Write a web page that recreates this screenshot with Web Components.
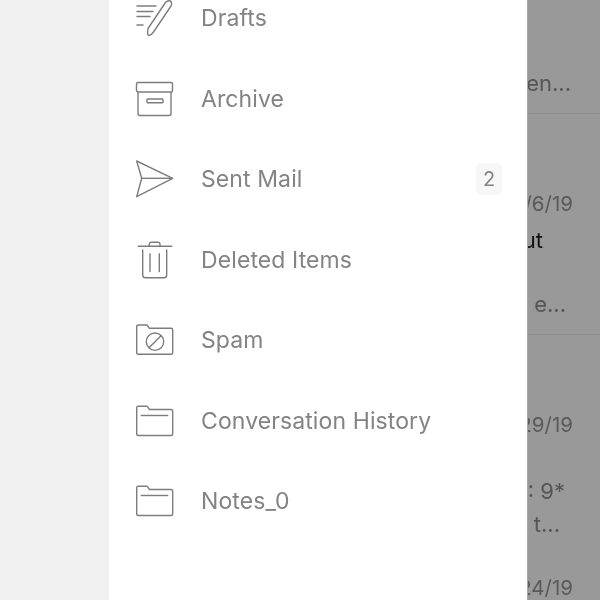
<!DOCTYPE html>
<html>
<head>
<meta charset="utf-8">
<title>Mail folders</title>
<style>
    html, body { margin: 0; height: 100%; overflow: hidden; }
    body { font-family: Inter, "Liberation Sans", sans-serif; }
</style>
</head>
<body>

<!-- Defines element markup -->
<template id="mail-screen">
    <style>
        :host {
            display: grid;
            grid-template-columns: 109px 418px 73px;
            width: 600px;
            height: 600px;
            overflow: hidden;
            filter: blur(0.3px);
        }

        .rail { background: #f0f0f0; }
    </style>
    <div class="rail"></div>
    <slot name="drawer"></slot>
    <slot name="peek"></slot>
</template>

<template id="folder-list">
    <style>
        :host {
            display: flex;
            flex-direction: column;
            background: #fff;
            height: 600px;
            overflow: hidden;
        }

        .rows {
            display: flex;
            flex-direction: column;
            margin-top: -22px;
        }
    </style>
    <div class="rows"><slot></slot></div>
</template>

<template id="folder-row">
    <style>
        :host {
            display: flex;
            align-items: center;
            height: 80.5px;
            flex: none;
            padding: 0 25px 0 26px;
            color: #838383;
            font-size: 23px;
            letter-spacing: 0.1px;
        }

        .icon {
            width: 40px;
            height: 40px;
            flex: none;
            margin-right: 26px;
        }

        ::slotted(svg) {
            display: block;
            width: 40px;
            height: 40px;
        }

        .label { flex: 1; white-space: nowrap; }

        .badge {
            display: none;
            align-items: center;
            justify-content: center;
            width: 26px;
            height: 32px;
            border-radius: 5px;
            background: #f7f7f7;
            font-size: 20px;
            letter-spacing: 0;
        }

        :host([count]) .badge { display: flex; }
    </style>
    <div class="icon"><slot name="icon"></slot></div>
    <div class="label"><slot></slot></div>
    <div class="badge"></div>
</template>

<template id="mail-peek">
    <style>
        :host {
            display: flex;
            flex-direction: column;
            box-sizing: border-box;
            background: #999;
            border-left: 1px solid #a9a9a9;
            height: 600px;
            overflow: hidden;
        }

        ::slotted(hr) {
            flex: none;
            width: 100%;
            height: 1px;
            border: 0;
            margin-bottom: 0;
            margin-left: 0;
            margin-right: 0;
            background: #8a8a8a;
        }
    </style>
    <slot></slot>
</template>

<template id="peek-line">
    <style>
        :host {
            display: flex;
            justify-content: flex-end;
            flex: none;
            height: 30px;
            line-height: 30px;
            color: #555;
            font-size: 22px;
            white-space: nowrap;
            overflow: hidden;
        }

        :host([dark]) { color: #111; }
        :host([date]) { font-size: 20.5px; color: #5a5a5a; }
    </style>
    <slot></slot>
</template>

<mail-screen>
    <folder-list slot="drawer">
        <folder-row>
            <svg slot="icon" viewBox="0 0 40 40" fill="none" stroke="#7d7d7d" stroke-width="1.4" stroke-linecap="round" stroke-linejoin="round">
                <path d="M2 8H21M2 13.5H18M2 18.5H15M2 27H8"/>
                <path d="M13 30.5L30.5 4.5Q33 2 35.5 3Q37.5 5 36 8L18.5 34Q15 38 13.5 37.5Q12 36.5 13 30.5Z"/>
            </svg>
            Drafts
        </folder-row>
        <folder-row>
            <svg slot="icon" viewBox="0 0 40 40" fill="none" stroke="#7d7d7d" stroke-width="1.4" stroke-linejoin="round">
                <rect x="1.5" y="3.5" width="36" height="9.5" rx="1.5"/>
                <path d="M3 13V34.5Q3 36.5 5 36.5H34Q36 36.5 36 34.5V13"/>
                <rect x="12" y="20" width="16" height="3.8" rx="0.8"/>
            </svg>
            Archive
        </folder-row>
        <folder-row count="2">
            <svg slot="icon" viewBox="0 0 40 40" fill="none" stroke="#7d7d7d" stroke-width="1.4" stroke-linejoin="round">
                <path d="M1.7 2L37.7 19.3L1.7 37.7L6.7 19.3Z"/>
                <path d="M6.7 19.3H37.7"/>
            </svg>
            Sent Mail
        </folder-row>
        <folder-row>
            <svg slot="icon" viewBox="0 0 40 40" fill="none" stroke="#7d7d7d" stroke-width="1.4" stroke-linecap="round" stroke-linejoin="round">
                <path d="M3.3 6.2H36.7"/>
                <path d="M14.3 6V4Q14.3 2.2 16 2.2H23.3Q25 2.2 25 4V6"/>
                <path d="M7.7 10V35Q7.7 37.8 10.5 37.8H29Q31.7 37.8 31.7 35V10"/>
                <path d="M15 13.8V31.5M24.3 13.8V31.5"/>
            </svg>
            Deleted Items
        </folder-row>
        <folder-row>
            <svg slot="icon" viewBox="0 0 40 40" fill="none" stroke="#7d7d7d" stroke-width="1.4" stroke-linejoin="round">
                <path d="M1.7 6.5Q1.7 5 3.2 5H12L14.5 8.3H36Q37.7 8.3 37.7 10V32.8Q37.7 34.3 36 34.3H3.2Q1.7 34.3 1.7 32.8Z"/>
                <circle cx="20" cy="21.7" r="8.7"/>
                <path d="M14 27.7L26 15.7"/>
            </svg>
            Spam
        </folder-row>
        <folder-row>
            <svg slot="icon" viewBox="0 0 40 40" fill="none" stroke="#7d7d7d" stroke-width="1.4" stroke-linejoin="round">
                <path d="M1.7 6.7Q1.7 5.2 3.2 5.2H12L14.5 8.5H36Q37.7 8.5 37.7 10V33Q37.7 34.5 36 34.5H3.2Q1.7 34.5 1.7 33Z"/>
                <path d="M5.7 14.5H33.3"/>
            </svg>
            Conversation History
        </folder-row>
        <folder-row>
            <svg slot="icon" viewBox="0 0 40 40" fill="none" stroke="#7d7d7d" stroke-width="1.4" stroke-linejoin="round">
                <path d="M1.7 6.7Q1.7 5.2 3.2 5.2H12L14.5 8.5H36Q37.7 8.5 37.7 10V33Q37.7 34.5 36 34.5H3.2Q1.7 34.5 1.7 33Z"/>
                <path d="M5.7 14.5H33.3"/>
            </svg>
            Notes_0
        </folder-row>
    </folder-list>

    <mail-peek slot="peek">
        <peek-line style="margin-top:68px;padding-right:29px">en...</peek-line>
        <hr style="margin-top:15px">
        <peek-line date style="margin-top:75px;padding-right:27px">/6/19</peek-line>
        <peek-line dark style="margin-top:6px;padding-right:57px">ut</peek-line>
        <peek-line style="margin-top:34px;padding-right:34px">e...</peek-line>
        <hr style="margin-top:15px">
        <peek-line date style="margin-top:75px;padding-right:27px">29/19</peek-line>
        <peek-line style="margin-top:36px;padding-right:35px">: 9*</peek-line>
        <peek-line style="margin-top:3px;padding-right:40px">t...</peek-line>
        <peek-line date style="margin-top:34px;padding-right:27px">24/19</peek-line>
    </mail-peek>
</mail-screen>

<script>
    // every element just stamps its template into an open shadow root
    class TemplateElement extends HTMLElement {
        constructor(id) {
            super();
            let template = document.getElementById(id);
            const shadowRoot = this.attachShadow({ mode: "open" });
            shadowRoot.appendChild(template.content.cloneNode(true));
        }
    }

    customElements.define("mail-screen", class extends TemplateElement {
        constructor() { super("mail-screen"); }
    });

    customElements.define("folder-list", class extends TemplateElement {
        constructor() { super("folder-list"); }
    });

    customElements.define("folder-row", class extends TemplateElement {
        constructor() { super("folder-row"); }

        connectedCallback() {
            if (this.hasAttribute("count")) {
                this.shadowRoot.querySelector(".badge").textContent = this.getAttribute("count");
            }
        }
    });

    customElements.define("mail-peek", class extends TemplateElement {
        constructor() { super("mail-peek"); }
    });

    customElements.define("peek-line", class extends TemplateElement {
        constructor() { super("peek-line"); }
    });
</script>
</body>
</html>
